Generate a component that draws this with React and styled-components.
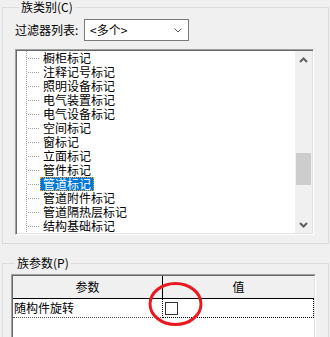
import styled, { createGlobalStyle } from "styled-components";

const items = [
  "橱柜标记",
  "注释记号标记",
  "照明设备标记",
  "电气装置标记",
  "电气设备标记",
  "空间标记",
  "窗标记",
  "立面标记",
  "管件标记",
  "管道标记",
  "管道附件标记",
  "管道隔热层标记",
  "结构基础标记",
];

const App = () => {
  return (
    <>
      <GlobalStyle />
      <Page>
        <Group $top={0} $pad="5px 14px 8px 12px">
          <Legend>族类别(C)</Legend>
          <FilterRow>
            <FilterLabel>过滤器列表:</FilterLabel>
            <Combo>
              <span>&lt;多个&gt;</span>
              <svg width="8" height="5" viewBox="0 0 8 5">
                <polyline points="0.5,0.5 4,4 7.5,0.5" fill="none" stroke="#606060" strokeWidth="1" />
              </svg>
            </Combo>
          </FilterRow>
          <ListBox>
            <Tree>
              {items.map((name) => (
                <Item key={name}>
                  <Connector />
                  <ItemLabel $selected={name === "管道标记"}>{name}</ItemLabel>
                </Item>
              ))}
            </Tree>
            <ScrollBar>
              <ArrowButton>
                <svg width="9" height="6" viewBox="0 0 9 6">
                  <polyline points="1,5 4.5,1.5 8,5" fill="none" stroke="#606060" strokeWidth="2" />
                </svg>
              </ArrowButton>
              <Track>
                <Thumb />
              </Track>
              <ArrowButton>
                <svg width="9" height="6" viewBox="0 0 9 6">
                  <polyline points="1,1 4.5,4.5 8,1" fill="none" stroke="#606060" strokeWidth="2" />
                </svg>
              </ArrowButton>
            </ScrollBar>
          </ListBox>
        </Group>

        <Group $top={12} $pad="4px 12px 0 8px">
          <Legend>族参数(P)</Legend>
          <TableFrame>
            <TableInner>
              <HeadCell $divider>参数</HeadCell>
              <HeadCell>值</HeadCell>
              <NameCell>随构件旋转</NameCell>
              <ValueCell>
                <CheckBox />
                <Mark width="60" height="50" viewBox="0 0 60 50">
                  <ellipse cx="29.5" cy="25" rx="25.5" ry="20.5" fill="none" stroke="#ea1820" strokeWidth="3" />
                </Mark>
              </ValueCell>
            </TableInner>
          </TableFrame>
        </Group>
      </Page>
    </>
  );
};

const GlobalStyle = createGlobalStyle`
  html, body {
    margin: 0;
    background: #f0f0f0;
    overflow: hidden;
  }
  body {
    font-family: "Noto Sans CJK SC", "Liberation Sans", sans-serif;
    font-size: 12px;
    color: #000;
  }
`;

const Page = styled.div`
  width: 330px;
  height: 337px;
  overflow: hidden;
`;

const Group = styled.fieldset`
  margin: ${(p) => p.$top}px 1px 0 2px;
  padding: ${(p) => p.$pad};
  border: 1px solid #dcdcdc;
  min-width: 0;
`;

const Legend = styled.legend`
  margin-left: 4px;
  padding: 0 2px;
  font-size: 12px;
  line-height: 14px;
  height: 14px;
`;

const FilterRow = styled.div`
  display: flex;
  align-items: center;
  height: 22px;
`;

const FilterLabel = styled.span`
  width: 69px;
  line-height: 16px;
`;

const Combo = styled.div`
  box-sizing: border-box;
  width: 105px;
  height: 22px;
  border: 1px solid #7a7a7a;
  background: #fff;
  display: flex;
  align-items: center;
  justify-content: space-between;
  padding: 0 6px 0 5px;
  line-height: 16px;
`;

const ListBox = styled.div`
  box-sizing: border-box;
  margin-top: 8px;
  width: 299px;
  height: 186px;
  display: flex;
  border: 1px solid;
  border-color: #a0a0a0 #ffffff #ffffff #a0a0a0;
  box-shadow: inset 1px 1px 0 #696969, inset -1px -1px 0 #e3e3e3;
  padding: 1px;
  background: #fff;
`;

const Tree = styled.div`
  flex: 1;
  overflow: hidden;
  background: #fff;
  padding-left: 9px;
`;

const Item = styled.div`
  display: flex;
  align-items: center;
  height: 14px;
`;

const Connector = styled.span`
  width: 14px;
  height: 14px;
  flex: none;
  background:
    repeating-linear-gradient(to bottom, #a0a0a0 0 1px, transparent 1px 2px) 0 0 / 1px 100% no-repeat,
    repeating-linear-gradient(to right, #a0a0a0 0 1px, transparent 1px 2px) 2px 7px / 12px 1px no-repeat;
`;

const ItemLabel = styled.span`
  height: 14px;
  line-height: 14px;
  padding: 0 3px;
  outline: ${(p) => (p.$selected ? "1px dotted #f59a2e" : "none")};
  outline-offset: -1px;
  background: ${(p) => (p.$selected ? "#0078d7" : "transparent")};
  color: ${(p) => (p.$selected ? "#fff" : "#000")};
  white-space: nowrap;
`;

const ScrollBar = styled.div`
  width: 17px;
  flex: none;
  display: flex;
  flex-direction: column;
  background: #f0f0f0;
`;

const ArrowButton = styled.div`
  height: 17px;
  display: flex;
  align-items: center;
  justify-content: center;
`;

const Track = styled.div`
  flex: 1;
  padding-top: 85px;
`;

const Thumb = styled.div`
  height: 32px;
  margin: 0 1px;
  background: #cdcdcd;
`;

const TableFrame = styled.div`
  width: 305px;
  height: 90px;
  box-sizing: border-box;
  border: 1px solid;
  border-color: #a0a0a0 #ffffff #ffffff #a0a0a0;
`;

const TableInner = styled.div`
  height: 100%;
  box-sizing: border-box;
  border: 1px solid;
  border-color: #696969 #e3e3e3 #e3e3e3 #696969;
  background: #fff;
  display: grid;
  grid-template-columns: 150px 1fr;
  grid-template-rows: 23px 19px;
  align-content: start;
`;

const HeadCell = styled.div`
  background: #f0f0f0;
  border-bottom: 1px solid #000;
  border-right: ${(p) => (p.$divider ? "1px solid #000" : "none")};
  display: flex;
  align-items: center;
  justify-content: center;
  line-height: 16px;
`;

const NameCell = styled.div`
  border-bottom: 1px dotted #555;
  padding-left: 1px;
  display: flex;
  align-items: center;
  line-height: 16px;
`;

const ValueCell = styled.div`
  position: relative;
  margin-left: -1px;
  border: 1px dotted #000;
  border-top: none;
  display: flex;
  align-items: flex-start;
  padding: 3px 0 0 2px;
`;

const CheckBox = styled.span`
  box-sizing: border-box;
  width: 13px;
  height: 13px;
  border: 1px solid #333;
  background: #fff;
`;

const Mark = styled.svg`
  position: absolute;
  left: -17px;
  top: -20px;
  z-index: 2;
`;

export default App;
